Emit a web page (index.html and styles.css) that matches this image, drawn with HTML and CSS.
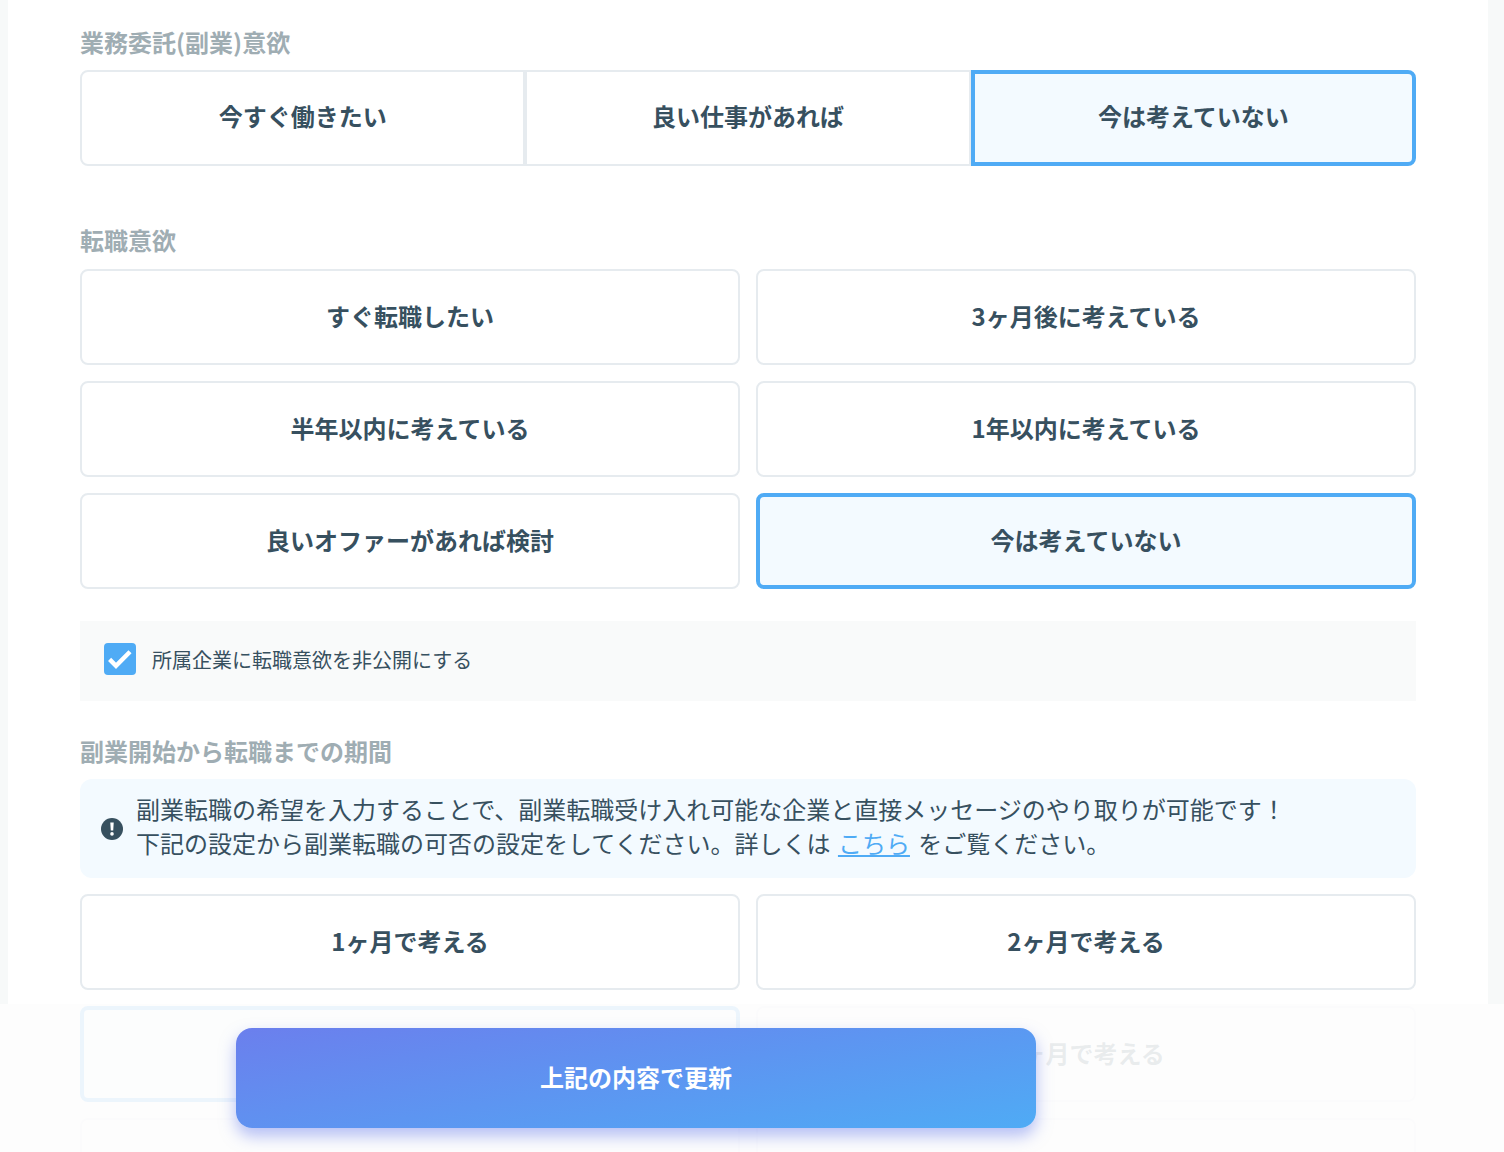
FILE: index.html
```html
<!DOCTYPE html>
<html lang="ja">
<head>
<meta charset="utf-8">
<title>副業転職の設定</title>
<link rel="stylesheet" href="styles.css">
</head>
<body>
<main class="sheet">
  <section class="group group-first">
    <h2 class="label">業務委託(副業)意欲</h2>
    <div class="segments">
      <button class="segment segment-start">今すぐ働きたい</button>
      <button class="segment">良い仕事があれば</button>
      <button class="segment segment-end is-selected">今は考えていない</button>
    </div>
  </section>

  <section class="group group-second">
    <h2 class="label">転職意欲</h2>
    <div class="options">
      <button class="option">すぐ転職したい</button>
      <button class="option">3ヶ月後に考えている</button>
      <button class="option">半年以内に考えている</button>
      <button class="option">1年以内に考えている</button>
      <button class="option">良いオファーがあれば検討</button>
      <button class="option is-selected">今は考えていない</button>
    </div>
    <label class="privacy">
      <span class="checkbox">
        <svg viewBox="0 0 32 32" width="32" height="32" aria-hidden="true"><path d="M5.6 16.4l6.4 6.4L26 8.8" fill="none" stroke="#fff" stroke-width="4.4"/></svg>
      </span>
      <span class="privacy-text">所属企業に転職意欲を非公開にする</span>
    </label>
  </section>

  <section class="group group-third">
    <h2 class="label">副業開始から転職までの期間</h2>
    <div class="notice">
      <svg class="notice-icon" viewBox="0 0 22 22" width="22" height="22" aria-hidden="true">
        <circle cx="11" cy="11" r="11" fill="#37505f"/>
        <path d="M9.3 4.6h3.4l-.5 8h-2.4z" fill="#fff"/>
        <circle cx="11" cy="15.9" r="1.8" fill="#fff"/>
      </svg>
      <p class="notice-text">副業転職の希望を入力することで、副業転職受け入れ可能な企業と直接メッセージのやり取りが可能です！<br>下記の設定から副業転職の可否の設定をしてください。詳しくは <a class="notice-link" href="#">こちら</a> をご覧ください。</p>
    </div>
    <div class="options">
      <button class="option">1ヶ月で考える</button>
      <button class="option">2ヶ月で考える</button>
      <button class="option is-selected">3ヶ月で考える</button>
      <button class="option">6ヶ月で考える</button>
      <button class="option" aria-label="1年で考える"></button>
      <button class="option" aria-label="考えていない"></button>
    </div>
  </section>
</main>

<footer class="action-bar">
  <button class="submit">上記の内容で更新</button>
</footer>
</body>
</html>
```

FILE: styles.css
```css
* {
  box-sizing: border-box;
}

html,
body {
  margin: 0;
  height: 1152px;
  overflow: hidden;
}

body {
  position: relative;
  background: #f7f9f9;
  font-family: "Noto Sans CJK JP", "Noto Sans", sans-serif;
  color: #37505f;
}

.sheet {
  width: 1480px;
  height: 1152px;
  margin-left: 8px;
  padding: 0 72px;
  background: #fff;
  overflow: hidden;
}

.group-first {
  padding-top: 26px;
}

.group-second {
  margin-top: 58px;
}

.group-third {
  margin-top: 34px;
}

.label {
  margin: 0 0 12px;
  font-size: 24px;
  line-height: 32px;
  font-weight: 700;
  color: #9fadb3;
}

.group-second .label {
  margin-bottom: 13px;
}

.segments {
  display: grid;
  grid-template-columns: repeat(3, 1fr);
}

.segment,
.option {
  height: 96px;
  padding: 0 0 4px;
  border: 2px solid #e6ebef;
  background: #fff;
  font-family: inherit;
  font-size: 24px;
  font-weight: 700;
  color: #37505f;
}

.segment {
  padding-bottom: 6px;
  border-radius: 0;
}

.segment-start {
  border-radius: 8px 0 0 8px;
}

.segment-end {
  border-radius: 0 8px 8px 0;
}

.options {
  display: grid;
  grid-template-columns: repeat(2, 1fr);
  gap: 16px;
}

.option {
  border-radius: 8px;
}

.is-selected {
  border: 4px solid #4fabf5;
  background: #f3faff;
}

.privacy {
  display: flex;
  align-items: center;
  gap: 16px;
  height: 80px;
  margin-top: 32px;
  padding: 0 0 4px 24px;
  background: #f9fafa;
  font-size: 20px;
}

.checkbox {
  display: block;
  width: 32px;
  height: 32px;
  border-radius: 4px;
  background: #4fabf5;
}

.checkbox svg {
  display: block;
}

.notice {
  display: flex;
  align-items: center;
  gap: 13px;
  height: 99px;
  margin-bottom: 16px;
  padding-left: 21px;
  border-radius: 12px;
  background: #f3faff;
}

.notice-icon {
  flex: none;
}

.notice-text {
  margin: 0 0 6px;
  font-size: 24px;
  line-height: 34px;
  color: #37505f;
}

.notice-link {
  margin: 0 3px 0 2px;
  color: #4fabf5;
}

.action-bar {
  position: absolute;
  left: 0;
  right: 0;
  top: 1004px;
  bottom: 0;
  padding: 24px 0 0 236px;
  background: rgba(253, 253, 253, 0.9);
}

.submit {
  display: block;
  width: 800px;
  height: 100px;
  padding: 0 0 4px;
  border: 0;
  border-radius: 16px;
  background: linear-gradient(170deg, #6b7fed 0%, #4fabf5 100%);
  box-shadow: 0 8px 16px rgba(107, 127, 237, 0.5);
  font-family: inherit;
  font-size: 24px;
  font-weight: 700;
  color: #fff;
}
```
